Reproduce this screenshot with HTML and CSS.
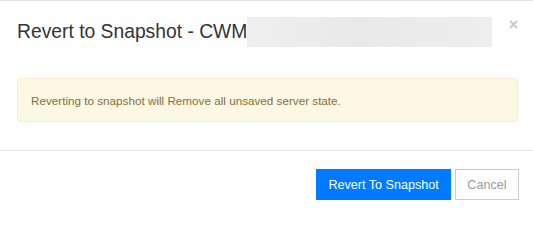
FILE: index.html
```html
<!DOCTYPE html>
<html>
<head>
<meta charset="utf-8">
<link rel="stylesheet" href="styles.css">
</head>
<body>
<div class="modal">
  <div class="modal-header">
    <h4 class="modal-title">Revert to Snapshot - CWM</h4>
    <div class="redacted"></div>
    <span class="close">&times;</span>
  </div>
  <div class="modal-body">
    <div class="alert">Reverting to snapshot will Remove all unsaved server state.</div>
  </div>
  <div class="modal-footer">
    <button class="btn btn-primary">Revert To Snapshot</button>
    <button class="btn btn-default">Cancel</button>
  </div>
</div>
</body>
</html>
```

FILE: styles.css
```css
html, body {
  margin: 0;
  padding: 0;
  background: #fff;
}
body {
  font-family: "Liberation Sans", Arial, sans-serif;
  width: 533px;
  height: 211px;
  overflow: hidden;
}
.modal {
  border-top: 1px solid #e5e5e5;
}
.modal-header {
  display: flex;
  align-items: flex-start;
  padding: 16px 15px 0 17px;
  height: 44px;
}
.modal-title {
  margin: 0;
  margin-top: 4px;
  font-size: 19.3px;
  font-weight: normal;
  color: #333;
  line-height: 22px;
  white-space: nowrap;
}
.redacted {
  width: 245px;
  height: 30px;
  background: linear-gradient(90deg, #efefef, #e9e9e9 45%, #eeeeee);
  flex: none;
}
.close {
  margin-left: auto;
  color: #c8c8c8;
  font-size: 16px;
  font-weight: bold;
  line-height: 14px;
  margin-top: 1px;
}
.modal-body {
  padding: 17px 15px 28px 17px;
}
.alert {
  background: #fcf8e3;
  border: 1px solid #faebcc;
  border-radius: 4px;
  color: #8a6d3b;
  font-size: 11.7px;
  height: 44px;
  box-sizing: border-box;
  display: flex;
  align-items: center;
  padding: 0 13px;
}
.modal-footer {
  border-top: 1px solid #e5e5e5;
  display: flex;
  justify-content: flex-end;
  gap: 4px;
  padding: 18px 14px 0 0;
}
.btn {
  font-family: "Liberation Sans", Arial, sans-serif;
  font-size: 12.6px;
  height: 31px;
  box-sizing: border-box;
  border: 1px solid transparent;
  border-radius: 0;
  padding: 0 11px;
  cursor: pointer;
}
.btn-primary {
  background: #007bff;
  border-color: #007bff;
  color: #fff;
}
.btn-default {
  background: #fff;
  border-color: #ccc;
  color: #999;
  padding: 0 11.5px;
}
```
